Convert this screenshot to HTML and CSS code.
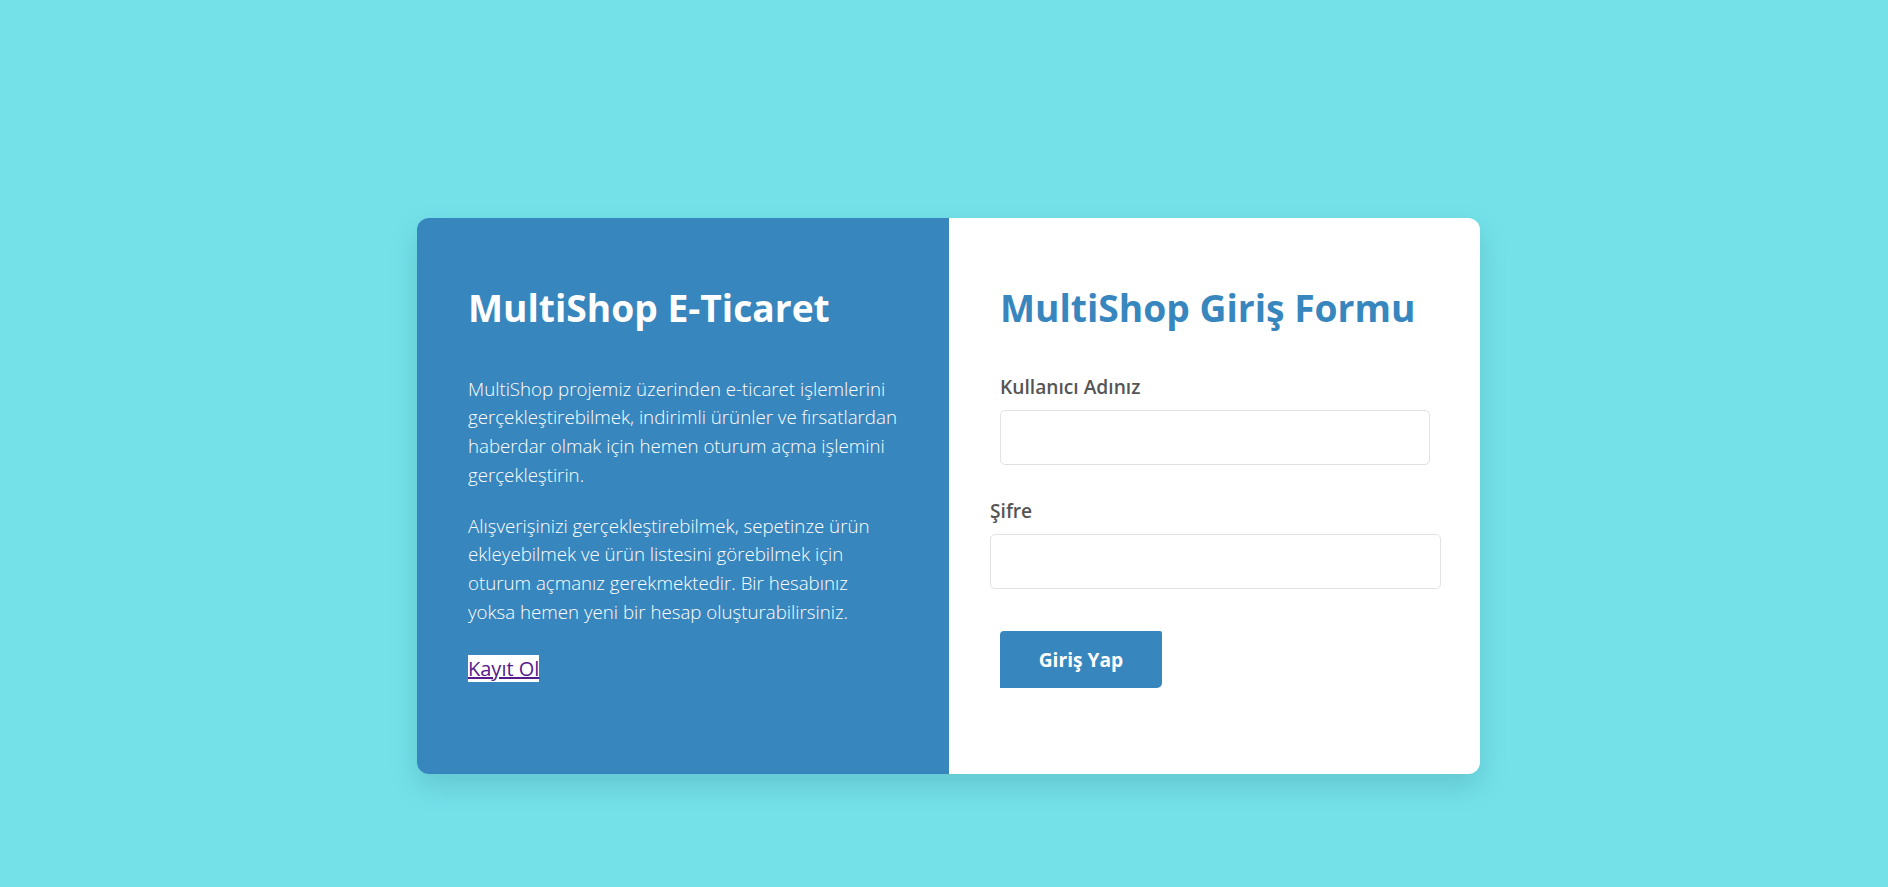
FILE: index.html
```html
<!DOCTYPE html>
<html lang="tr">
<head>
<meta charset="utf-8">
<title>MultiShop Giriş</title>
<link rel="stylesheet" href="styles.css">
</head>
<body>
<div class="page">
  <div class="card">
    <section class="intro">
      <h1 class="intro-title">MultiShop E-Ticaret</h1>
      <p class="intro-text first">MultiShop projemiz üzerinden e-ticaret işlemlerini gerçekleştirebilmek, indirimli ürünler ve fırsatlardan haberdar olmak için hemen oturum açma işlemini gerçekleştirin.</p>
      <p class="intro-text">Alışverişinizi gerçekleştirebilmek, sepetinze ürün ekleyebilmek ve ürün listesini görebilmek için oturum açmanız gerekmektedir. Bir hesabınız yoksa hemen yeni bir hesap oluşturabilirsiniz.</p>
      <p class="intro-link-row"><a class="intro-link" href="#">Kayıt Ol</a></p>
    </section>
    <section class="login">
      <h2 class="login-title">MultiShop Giriş Formu</h2>
      <form class="login-form">
        <div class="field">
          <label class="field-label" for="user">Kullanıcı Adınız</label>
          <input class="field-input" id="user" type="text">
        </div>
        <div class="field field-wide">
          <label class="field-label" for="pass">Şifre</label>
          <input class="field-input" id="pass" type="password">
        </div>
        <button class="login-btn" type="button">Giriş Yap</button>
      </form>
    </section>
  </div>
</div>
</body>
</html>
```
FILE: styles.css
```css
* { box-sizing: border-box; }

html, body {
  margin: 0;
  height: 100%;
}

body {
  background: #74e1e9;
  font-family: "Open Sans", "Liberation Sans", sans-serif;
  font-size: 19.2px;
  line-height: 28.8px;
}

.page {
  display: flex;
  justify-content: center;
  padding: 218px 0 0 9px;
}

.card {
  display: flex;
  width: 1063px;
  height: 556px;
  border-radius: 12px;
  overflow: hidden;
  box-shadow: 0 12px 28px rgba(20, 80, 90, 0.18);
}

.intro {
  flex: 0 0 532px;
  background: #3886be;
  color: #ffffff;
  padding: 64px 51px 0 51px;
}

.intro-title,
.login-title {
  margin: 0;
  font-size: 37.2px;
  line-height: normal;
  font-weight: 700;
}

.intro-text {
  margin: 22px 0 0;
  font-size: 18.7px;
  font-weight: 300;
}

.intro-text.first {
  margin-top: 41.5px;
}

.intro-link-row {
  margin: 28px 0 0;
}

.intro-link {
  background: #ffffff;
  color: #551a8b;
  text-decoration: underline;
  font-weight: 400;
  font-size: 20px;
}

.login {
  flex: 1;
  background: #ffffff;
  padding: 64px 0 0 51px;
}

.login-title {
  color: #3886be;
}

.login-form {
  display: flex;
  flex-direction: column;
  align-items: flex-start;
  margin-top: 39.5px;
}

.field {
  display: flex;
  flex-direction: column;
}

.field-label {
  color: #555555;
  font-weight: 600;
  margin-bottom: 9px;
}

.field-input {
  width: 430px;
  height: 55px;
  border: 1px solid #e2e2e2;
  border-radius: 5px;
  background: #ffffff;
  font: inherit;
  padding: 0 12px;
  outline: none;
}

.field-wide {
  margin: 32px 0 0 -10px;
}

.field-wide .field-label {
  margin-bottom: 8px;
}

.field-wide .field-input {
  width: 451px;
}

.login-btn {
  margin-top: 42px;
  width: 162px;
  height: 57px;
  border: none;
  border-radius: 4px 2px 5px 0;
  background: #3886be;
  color: #ffffff;
  font-family: inherit;
  font-size: 19.2px;
  font-weight: 700;
  cursor: pointer;
}
```
